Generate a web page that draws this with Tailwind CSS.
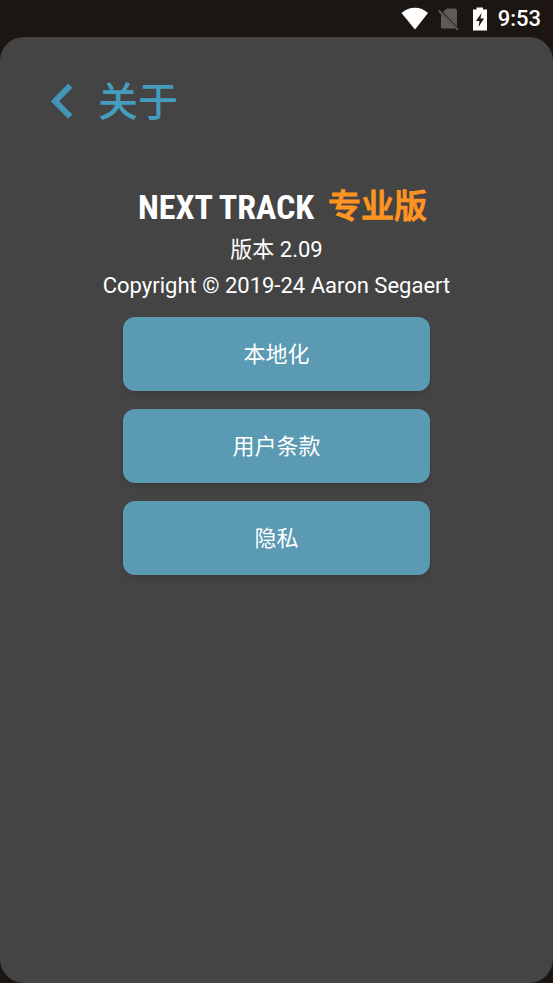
<!DOCTYPE html>
<html lang="zh-CN">
<head>
<meta charset="utf-8">
<meta name="viewport" content="width=device-width, initial-scale=1">
<title>关于</title>
<script src="https://cdn.jsdelivr.net/npm/@tailwindcss/browser@4"></script>
</head>
<body class="flex min-h-screen flex-col bg-[#1c1612] font-[Roboto,'Noto_Sans_CJK_SC',sans-serif] text-white">
  <div class="flex h-[37px] shrink-0 items-center justify-end pr-3">
    <svg class="mr-2 h-6 w-7" viewBox="0 0 28 24" fill="#fff" aria-hidden="true"><path d="M15 22.500 1.500 6C5.500 2.500 10 0.800 15 0.800S24 2.500 28 6Z"/></svg>
    <svg class="mr-3 h-6 w-6" viewBox="0 0 24 24" aria-hidden="true"><path fill="#5f5a57" d="M10.500 1.500H19Q21 1.500 21 3.500V19.500L7 5Z"/><path fill="#5f5a57" d="M5 7 19.500 21.500H6.500Q5 21.500 5 20Z"/><path stroke="#5f5a57" stroke-width="2" d="M2.800 3.500 22 22.700"/></svg>
    <svg class="mr-2.5 h-6 w-4" viewBox="0 0 16 24" aria-hidden="true"><path fill="#fff" d="M4.500 0.500H11V2.500H15V23.500H1V2.500H4.500Z"/><path fill="#1c1612" d="M9.500 6 4 14H7.500L6.500 20 12 11.500H8.500Z"/></svg>
    <span class="text-[22px] leading-6 font-medium">9:53</span>
  </div>
  <div class="flex grow flex-col rounded-3xl bg-[#444444]">
    <header class="flex items-center gap-6 px-[50px] pt-[30px]">
      <button type="button" aria-label="返回" class="flex h-16 items-center">
        <svg class="h-9 w-6" viewBox="0 0 24 36" fill="#4296b8" aria-hidden="true"><path d="M18.200 0.500 22.300 4.800 9.200 18.200 22.300 31.500 18.200 35.800 0.800 18.200Z"/></svg>
      </button>
      <h1 class="pt-1 text-[40px] leading-16 font-medium text-[#449cbf]">关于</h1>
    </header>
    <main class="flex flex-col items-center pt-[47px]">
      <h2 class="flex items-center gap-3.5 pl-3 text-[34px] leading-[50px] font-bold">
        <span class="font-['Roboto_Condensed',Roboto,sans-serif]">NEXT TRACK</span>
        <span class="text-[33px] font-medium text-[#ff9420] [-webkit-text-stroke:1px_#ff9420]">专业版</span>
      </h2>
      <p class="text-[22px] leading-9">版本 2.09</p>
      <p class="text-[22px] leading-9">Copyright © 2019-24 Aaron Segaert</p>
      <div class="mt-[13px] flex w-5/9 flex-col gap-[18px] text-[22px]">
        <button type="button" class="h-[74px] rounded-xl bg-[#5a9ab2] shadow-md">本地化</button>
        <button type="button" class="h-[74px] rounded-xl bg-[#5a9ab2] shadow-md">用户条款</button>
        <button type="button" class="h-[74px] rounded-xl bg-[#5a9ab2] shadow-md">隐私</button>
      </div>
    </main>
  </div>
</body>
</html>
